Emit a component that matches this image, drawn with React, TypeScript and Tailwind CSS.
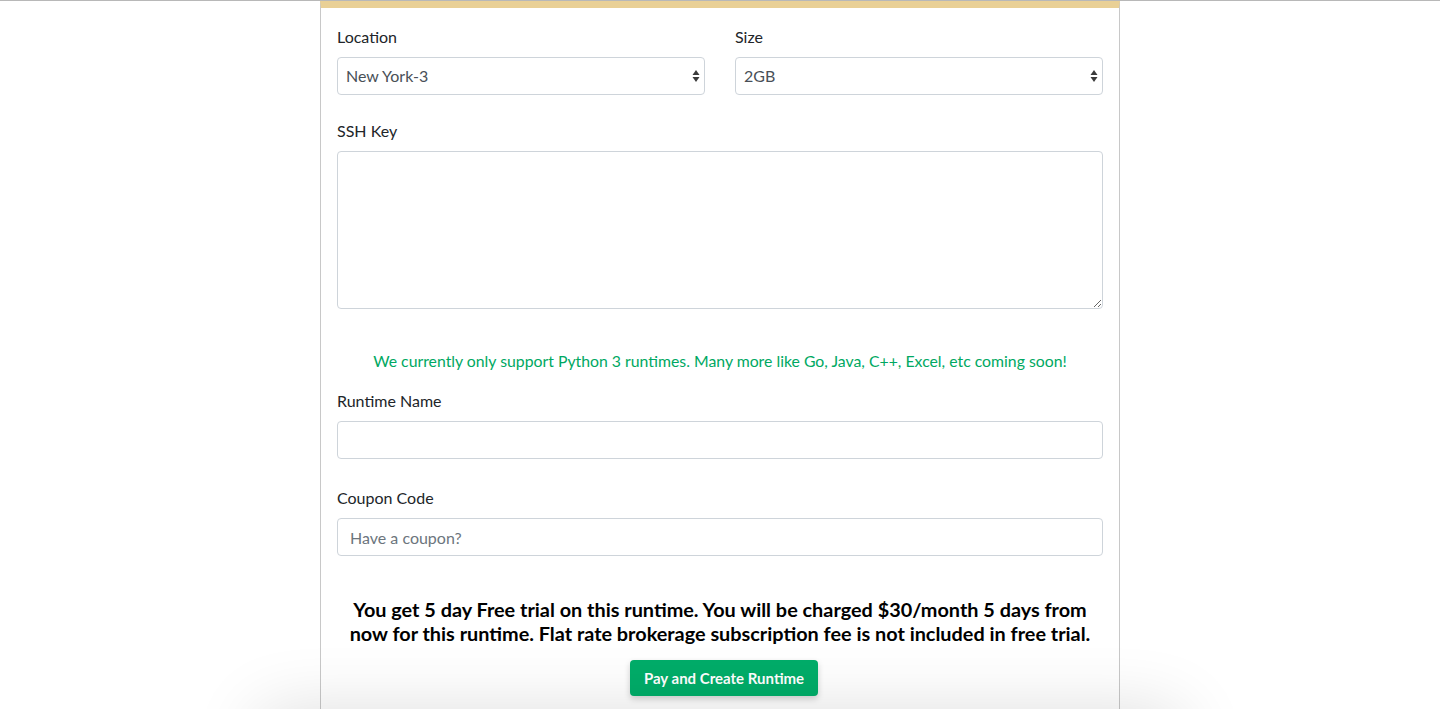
import React from "react";

const SelectArrows: React.FC = () => (
  <svg
    className="pointer-events-none absolute right-[5px] top-1/2 -translate-y-1/2"
    width="8"
    height="14"
    viewBox="0 0 8 14"
  >
    <path d="M4 1 L7.5 6 H0.5 Z" fill="#3a3a3a" />
    <path d="M4 13 L7.5 8 H0.5 Z" fill="#3a3a3a" />
  </svg>
);

interface FieldSelectProps {
  label: string;
  value: string;
  options: string[];
}

const FieldSelect: React.FC<FieldSelectProps> = ({ label, value, options }) => (
  <div className="flex flex-col">
    <label className="mb-[10px] text-[16px] leading-[20px] text-[#212529]">{label}</label>
    <div className="relative">
      <select
        defaultValue={value}
        className="h-[38px] w-full appearance-none rounded-[4px] border border-[#ced4da] bg-white pl-[8px] pr-6 text-[16px] text-[#495057] outline-none"
      >
        {options.map(o => (
          <option key={o}>{o}</option>
        ))}
      </select>
      <SelectArrows />
    </div>
  </div>
);

const App: React.FC = () => {
  return (
    <div
      className="min-h-[709px] overflow-hidden border-t border-[#b8b8b8] bg-white"
      style={{ fontFamily: "Lato, 'Open Sans', sans-serif" }}
    >
      <div className="mx-auto w-[800px] border-x border-[#c8c8c8] border-t-[7px] border-t-[#e9d096] bg-white px-4 pb-10 pt-[19px]">
        {/* location + size */}
        <div className="grid grid-cols-2 gap-[30px]">
          <FieldSelect label="Location" value="New York-3" options={["New York-3", "San Francisco-2", "London-1"]} />
          <FieldSelect label="Size" value="2GB" options={["1GB", "2GB", "4GB"]} />
        </div>

        {/* ssh key */}
        <div className="mt-[26px] flex flex-col">
          <label className="mb-[10px] text-[16px] leading-[20px] text-[#212529]">SSH Key</label>
          <textarea className="h-[158px] w-full rounded-[4px] border border-[#ced4da] bg-white px-3 py-2 text-[16px] text-[#495057] outline-none" />
        </div>

        <p className="mt-[42px] text-center text-[15.8px] leading-[20px] text-[#00a862]">
          We currently only support Python 3 runtimes. Many more like Go, Java, C++, Excel, etc coming soon!
        </p>

        {/* runtime name */}
        <div className="mt-[20px] flex flex-col">
          <label className="mb-[10px] text-[16px] leading-[20px] text-[#212529]">Runtime Name</label>
          <input className="h-[38px] w-full rounded-[4px] border border-[#ced4da] bg-white px-3 text-[16px] text-[#495057] outline-none" />
        </div>

        {/* coupon */}
        <div className="mt-[29px] flex flex-col">
          <label className="mb-[10px] text-[16px] leading-[20px] text-[#212529]">Coupon Code</label>
          <input
            placeholder="Have a coupon?"
            className="h-[38px] w-full rounded-[4px] border border-[#ced4da] bg-white px-3 text-[16px] text-[#495057] outline-none placeholder:text-[#6c757d]"
          />
        </div>

        <p className="mt-[41px] text-center text-[19.85px] font-bold leading-[24px] text-black">
          You get 5 day Free trial on this runtime. You will be charged $30/month 5 days from now for this runtime.
          Flat rate brokerage subscription fee is not included in free trial.
        </p>

        <div className="mt-[15px] flex justify-center pl-[8px]">
          <button className="h-[36px] w-[188px] rounded-[4px] bg-[#00ad69] text-[15px] font-bold text-white shadow-[0_3px_6px_rgba(0,0,0,0.18)]">
            Pay and Create Runtime
          </button>
        </div>
      </div>

      {/* shadow from the panel just below the fold */}
      <div className="pointer-events-none fixed left-[260px] top-[712px] h-[200px] w-[920px] shadow-[0_0_70px_rgba(0,0,0,0.14)]" />
    </div>
  );
};

export default App;
